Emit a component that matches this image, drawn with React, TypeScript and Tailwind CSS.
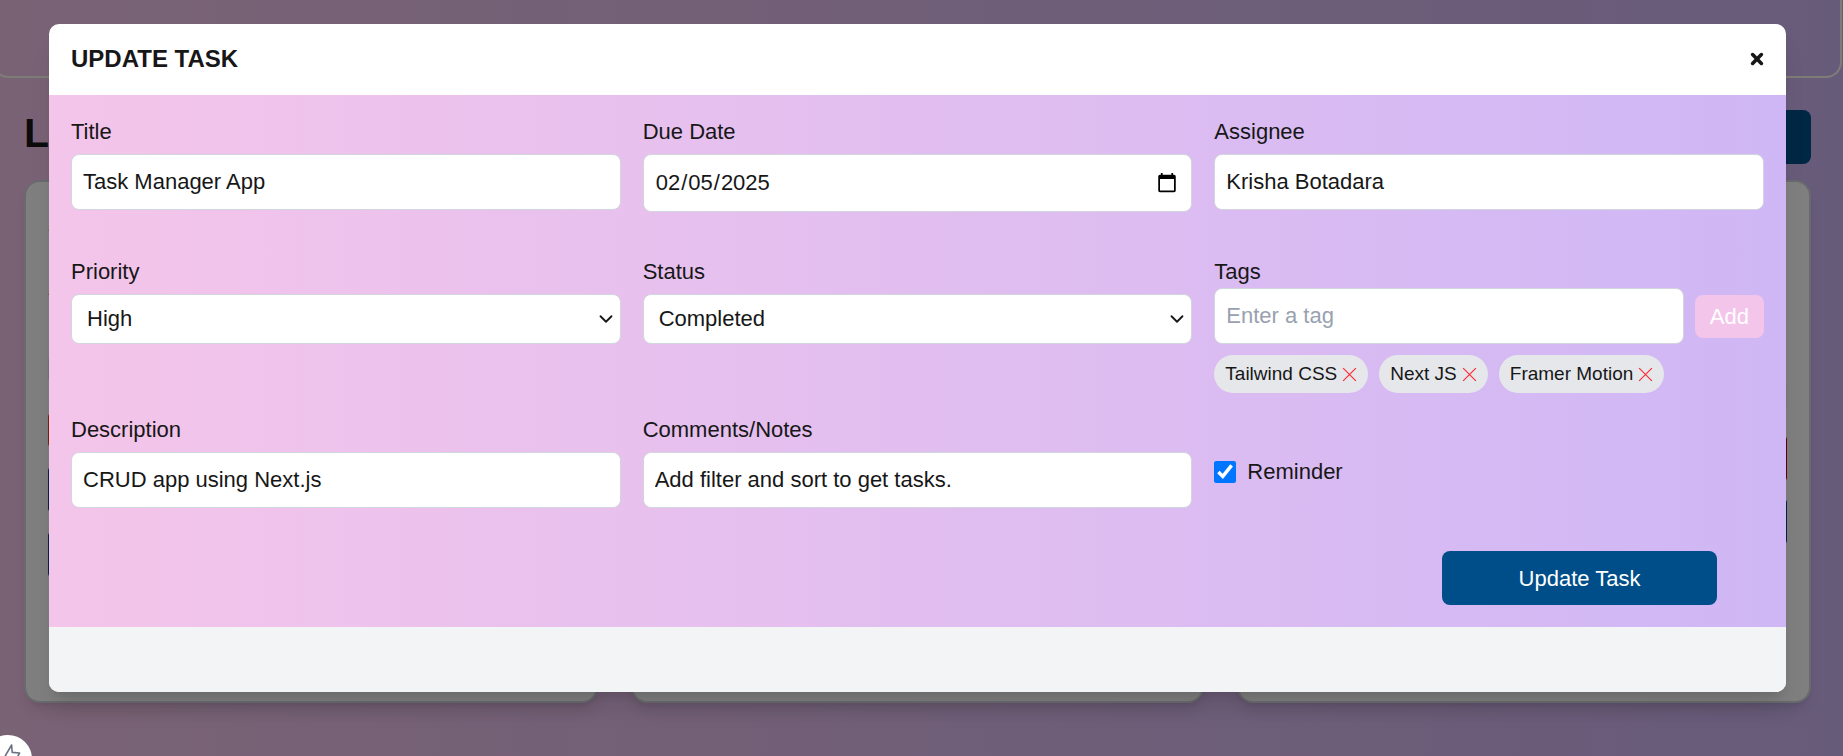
import React from "react";
import { ChevronDown } from "lucide-react";

const label = "mb-2 block text-[22px] leading-[29px]";
const fieldBase =
  "block w-full rounded-lg border border-gray-300 bg-white text-[22px] leading-[32px] text-[#171717]";
const field = `${fieldBase} p-[11px]`;
const dateField = `${fieldBase} px-[11px] py-3`;
const card = "h-[523px] rounded-2xl border-2 border-gray-300 bg-white p-[22px] shadow-lg";

function TaskCard() {
  return (
    <article className={card}>
      <p className="text-[27px] font-bold leading-[36px]">A</p>
      <p className="mt-[34px] text-[22px] font-bold leading-[28px]">A</p>
      <div className="mt-[55px] h-6 rounded bg-slate-200" />
      <div className="mt-8 flex flex-col gap-[20px]">
        <div className="h-[34px] w-1/3 rounded bg-orange-600" />
        <div className="h-[45px] rounded bg-[#004e89]" />
        <div className="h-[45px] rounded bg-[#004e89]" />
      </div>
    </article>
  );
}

function OverdueCard() {
  return (
    <article className={card}>
      <div className="mt-[178px] h-8 rounded bg-emerald-50" />
      <div className="mt-[22px] h-[45px] rounded bg-red-700" />
      <div className="mt-[18px] h-[45px] rounded bg-[#004e89]" />
    </article>
  );
}

function Backdrop() {
  return (
    <div className="h-screen overflow-hidden" aria-hidden="true">
      <div className="-ml-[8px] mr-px h-[78px] rounded-b-2xl border-2 border-t-0 border-[#fbf9ef]" />
      <div className="flex items-start justify-between pl-6 pr-8 pt-8">
        <h1 className="text-[41px] font-bold leading-[46px]">L</h1>
        <div className="h-[54px] w-[200px] rounded-lg bg-[#004e89]" />
      </div>
      <div className="grid grid-cols-3 gap-[33px] pl-6 pr-8 pt-4">
        <TaskCard />
        <article className={card} />
        <OverdueCard />
      </div>
    </div>
  );
}

function SelectField({ id, value, options }: { id: string; value: string; options: string[] }) {
  return (
    <div className="grid items-center">
      <select
        id={id}
        defaultValue={value}
        className={`${fieldBase} col-start-1 row-start-1 appearance-none px-[15px] py-2`}
      >
        {options.map((option) => (
          <option key={option}>{option}</option>
        ))}
      </select>
      <ChevronDown className="pointer-events-none col-start-1 row-start-1 mr-1 size-[22px] justify-self-end" />
    </div>
  );
}

function Tag({ name }: { name: string }) {
  return (
    <li className="flex items-center gap-[5px] rounded-full bg-gray-200 px-[11px] text-[19px] leading-[38px]">
      {name}
      <button type="button" aria-label={`Remove ${name}`} className="text-red-500">
        <svg className="size-[15px]" viewBox="0 0 16 16" fill="none" stroke="currentColor" strokeWidth="1.3">
          <path d="M1.2 1.2 14.8 14.8M14.8 1.2 1.2 14.8" />
        </svg>
      </button>
    </li>
  );
}

export default function App() {
  return (
    <div className="relative h-screen overflow-hidden bg-linear-to-r from-[#f4c5ea] to-[#cfb7f5] font-['Liberation_Sans',Arial,sans-serif] text-[#171717]">
      <Backdrop />
      <div className="absolute inset-0 bg-black/50 pl-[49px] pr-[57px] pt-6">
        <div role="dialog" aria-labelledby="dialog-title" className="overflow-hidden rounded-[10px] bg-white shadow-xl">
          <header className="flex h-[71px] items-center justify-between px-[22px] pb-0.5">
            <h2 id="dialog-title" className="text-[24px] font-bold leading-[32px]">UPDATE TASK</h2>
            <button type="button" aria-label="Close">
              <svg className="size-[14px]" viewBox="0 0 14 14" stroke="currentColor" strokeWidth="3.6" strokeLinecap="round">
                <path d="M2.6 2.6 11.4 11.4M11.4 2.6 2.6 11.4" />
              </svg>
            </button>
          </header>
          <form className="bg-linear-to-r from-[#f4c5ea] to-[#cfb7f5] p-[22px]" onSubmit={(e) => e.preventDefault()}>
            <div className="grid grid-cols-3 gap-x-[22px]">
              <div className="h-[140px]">
                <label htmlFor="title" className={label}>Title</label>
                <input id="title" className={field} defaultValue="Task Manager App" />
              </div>
              <div>
                <label htmlFor="due" className={label}>Due Date</label>
                <input id="due" type="date" className={dateField} defaultValue="2025-02-05" />
              </div>
              <div>
                <label htmlFor="assignee" className={label}>Assignee</label>
                <input id="assignee" className={field} defaultValue="Krisha Botadara" />
              </div>
              <div className="h-[158px]">
                <label htmlFor="priority" className={label}>Priority</label>
                <SelectField id="priority" value="High" options={["High", "Medium", "Low"]} />
              </div>
              <div>
                <label htmlFor="status" className={label}>Status</label>
                <SelectField id="status" value="Completed" options={["Pending", "Completed"]} />
              </div>
              <div>
                <label htmlFor="tag" className="mb-0.5 block text-[22px] leading-[29px]">Tags</label>
                <div className="flex items-center gap-[11px]">
                  <input id="tag" className={`${field} placeholder:text-gray-400`} placeholder="Enter a tag" />
                  <button type="button" className="rounded-lg bg-[#f4c5ea] px-[15px] text-[22px] leading-[43px] text-white">Add</button>
                </div>
                <ul className="mt-[11px] flex flex-wrap gap-[11px]">
                  <Tag name="Tailwind CSS" />
                  <Tag name="Next JS" />
                  <Tag name="Framer Motion" />
                </ul>
              </div>
              <div>
                <label htmlFor="description" className={label}>Description</label>
                <input id="description" className={field} defaultValue="CRUD app using Next.js" />
              </div>
              <div>
                <label htmlFor="comments" className={label}>Comments/Notes</label>
                <input id="comments" className={field} defaultValue="Add filter and sort to get tasks." />
              </div>
              <div className="flex items-center gap-[11px] pt-5">
                <input id="reminder" type="checkbox" defaultChecked className="size-[22px]" />
                <label htmlFor="reminder" className="text-[22px] leading-[32px]">Reminder</label>
              </div>
            </div>
            <div className="mt-[43px] flex justify-end pr-[47px]">
              <button type="submit" className="h-[54px] w-[275px] rounded-lg bg-[#004e89] text-[22px] text-white">Update Task</button>
            </div>
          </form>
          <footer className="h-[65px] bg-gray-100" />
        </div>
      </div>
      <button type="button" aria-label="Developer tools" className="absolute -left-4 top-[735px] rounded-full bg-white text-gray-500">
        <svg className="size-12" viewBox="0 0 48 48" fill="none" stroke="currentColor" strokeWidth="1.6" strokeLinejoin="round">
          <path d="M20 23 27.6 10 28.2 17.4 35.6 18 28 31 27.4 23.6Z" />
        </svg>
      </button>
    </div>
  );
}
